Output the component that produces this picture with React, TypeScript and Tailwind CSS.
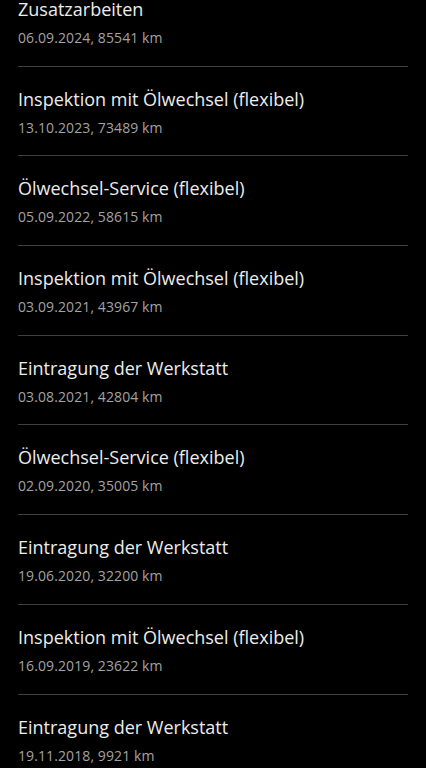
import React from "react";

const items = [
  { title: "Zusatzarbeiten", sub: "06.09.2024, 85541 km" },
  { title: "Inspektion mit Ölwechsel (flexibel)", sub: "13.10.2023, 73489 km" },
  { title: "Ölwechsel-Service (flexibel)", sub: "05.09.2022, 58615 km" },
  { title: "Inspektion mit Ölwechsel (flexibel)", sub: "03.09.2021, 43967 km" },
  { title: "Eintragung der Werkstatt", sub: "03.08.2021, 42804 km" },
  { title: "Ölwechsel-Service (flexibel)", sub: "02.09.2020, 35005 km" },
  { title: "Eintragung der Werkstatt", sub: "19.06.2020, 32200 km" },
  { title: "Inspektion mit Ölwechsel (flexibel)", sub: "16.09.2019, 23622 km" },
  { title: "Eintragung der Werkstatt", sub: "19.11.2018, 9921 km" },
];

export default function App() {
  return (
    <div
      className="w-[426px] h-[768px] overflow-hidden bg-black"
      style={{ fontFamily: '"Open Sans", "Noto Sans", sans-serif' }}
    >
      <div className="-mt-[23px] px-[18px]">
        {items.map((it, i) => (
          <div key={i} className="h-[89.7px] flex flex-col border-b border-[#3f3f3f] last:border-b-0">
            <div className="pt-[20px] text-[18px] leading-[24px] text-[#ececec]">{it.title}</div>
            <div className="mt-[7px] text-[14px] leading-[20px] tracking-[0.1px] text-[#a3a3a3]">{it.sub}</div>
          </div>
        ))}
      </div>
    </div>
  );
}
